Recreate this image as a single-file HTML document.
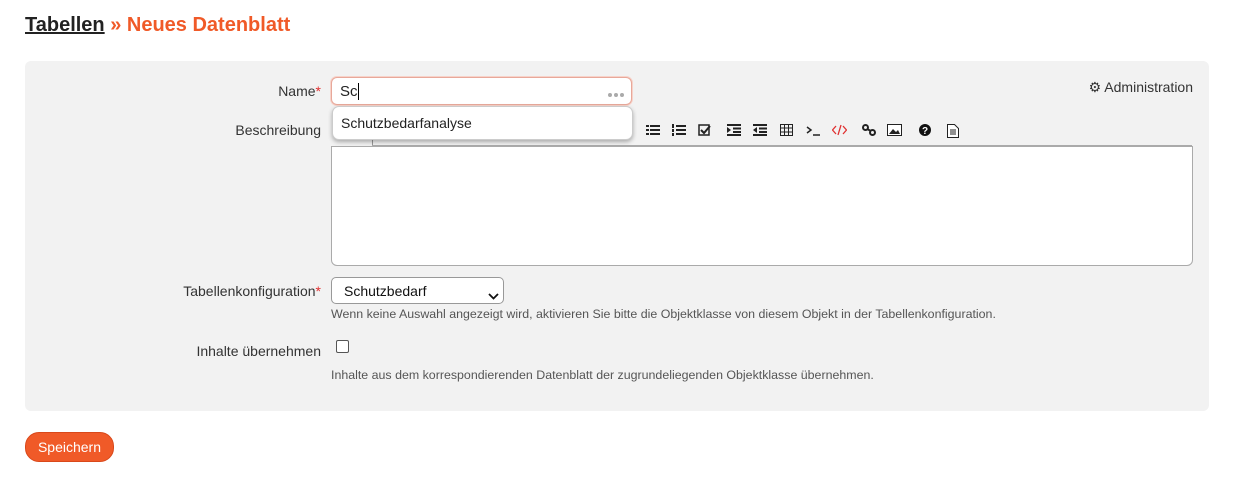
<!DOCTYPE html>
<html><head><meta charset="utf-8"><style>
body{margin:0;width:1236px;height:485px;background:#fff;font-family:"Liberation Sans",sans-serif;position:relative;color:#333;}
.abs{position:absolute}
h1{position:absolute;left:25px;top:14px;margin:0;font-size:20px;font-weight:bold;color:#f05a28;}
h1 u{color:#222;text-decoration-thickness:2px}
.panel{left:25px;top:61px;width:1184px;height:350px;background:#f2f2f2;border-radius:6px}
.lbl{font-size:14px;color:#333;text-align:right;width:300px;left:21px}
.star{color:#e03030}
.tb svg{position:absolute;top:0}
.hint{font-size:12.4px;color:#555;left:331px}
</style></head><body>
<h1><u>Tabellen</u> » Neues Datenblatt</h1>
<div class="abs panel"></div>
<div class="abs lbl" style="top:83px">Name<span class="star">*</span></div>
<div class="abs lbl" style="top:122px">Beschreibung</div>
<div class="abs lbl" style="top:283px">Tabellenkonfiguration<span class="star">*</span></div>
<div class="abs lbl" style="top:343px">Inhalte übernehmen</div>
<div class="abs" style="right:43px;top:79px;font-size:14px;color:#333">⚙ Administration</div>
<div class="abs" style="left:372px;top:130px;width:0;height:15px;border-left:1px solid #999"></div>
<div class="abs" style="left:372px;top:145px;width:820px;border-top:1px solid #aaa"></div>
<div class="abs" style="left:331px;top:146px;width:860px;height:118px;background:#fff;border:1px solid #aaa;border-radius:0 0 6px 6px"></div>
<div class="abs tb" style="left:0;top:124px">
<svg style="left:646px" width="14" height="12"><g fill="#222"><rect x="0" y="1" width="3" height="2"/><rect x="4" y="1" width="10" height="2"/><rect x="0" y="5" width="3" height="2"/><rect x="4" y="5" width="10" height="2"/><rect x="0" y="9" width="3" height="2"/><rect x="4" y="9" width="10" height="2"/></g></svg>
<svg style="left:672px" width="14" height="13"><g fill="#222"><rect x="4" y="1" width="10" height="2"/><rect x="4" y="5" width="10" height="2"/><rect x="4" y="9" width="10" height="2"/><rect x="0" y="0" width="2" height="4"/><rect x="0" y="5" width="2" height="3"/><rect x="0" y="9" width="2" height="3"/></g></svg>
<svg style="left:698px" width="13" height="12"><rect x="1" y="1" width="10" height="10" fill="none" stroke="#222" stroke-width="1.5"/><path d="M3 6l3 3 6-7" fill="none" stroke="#222" stroke-width="2"/></svg>
<svg style="left:727px" width="14" height="12"><g fill="#222"><rect x="0" y="0" width="14" height="2"/><rect x="6" y="3.5" width="8" height="2"/><rect x="6" y="7" width="8" height="2"/><rect x="0" y="10" width="14" height="2"/><path d="M0 3l4 3-4 3z"/></g></svg>
<svg style="left:753px" width="14" height="12"><g fill="#222"><rect x="0" y="0" width="14" height="2"/><rect x="6" y="3.5" width="8" height="2"/><rect x="6" y="7" width="8" height="2"/><rect x="0" y="10" width="14" height="2"/><path d="M4 3l-4 3 4 3z"/></g></svg>
<svg style="left:780px" width="13" height="12"><rect x="0.5" y="0.5" width="12" height="11" fill="none" stroke="#222"/><path d="M0 4h13M0 8h13M4.5 0v12M8.5 0v12" stroke="#222"/></svg>
<svg style="left:806px" width="14" height="12"><path d="M1 3l4 3-4 3" fill="none" stroke="#222" stroke-width="1.5"/><path d="M7 11h7" stroke="#222" stroke-width="1.5"/></svg>
<svg style="left:832px" width="15" height="12"><path d="M4 2L0.5 6 4 10M11 2l3.5 4L11 10M9 1L6 11" fill="none" stroke="#e03030" stroke-width="1.3"/></svg>
<svg style="left:862px" width="14" height="12"><circle cx="3.5" cy="3.5" r="2.5" fill="none" stroke="#222" stroke-width="2"/><circle cx="10.5" cy="8.5" r="2.5" fill="none" stroke="#222" stroke-width="2"/><path d="M5 5l4 2" stroke="#222" stroke-width="2"/></svg>
<svg style="left:887px" width="15" height="12"><rect x="0.5" y="0.5" width="14" height="11" fill="#fff" stroke="#222"/><path d="M2 10l4-5 3 3 2-2 2 4z" fill="#222"/></svg>
<svg style="left:919px" width="12" height="12"><circle cx="6" cy="6" r="6" fill="#111"/><text x="6" y="10" font-size="10" font-weight="bold" text-anchor="middle" fill="#fff" font-family="Liberation Sans">?</text></svg>
<svg style="left:947px" width="12" height="14"><path d="M0.5 0.5h7l4 4v9h-11z" fill="#fff" stroke="#222"/><path d="M3 6h6M3 8h6M3 10h6" stroke="#222"/></svg>
</div>
<div class="abs" style="left:331px;top:77px;width:299px;height:26px;background:#fff;border:1px solid #e8a89a;border-radius:6px;box-shadow:0 0 0 1px #f7d3ca"></div>
<div class="abs" style="left:340px;top:83px;font-size:15px;color:#222">Sc<span style="border-left:1px solid #000;margin-left:0px"></span></div>
<div class="abs" style="left:607px;top:85px;"><svg width="18" height="6"><g fill="#aaa"><circle cx="3" cy="3" r="2"/><circle cx="9" cy="3" r="2"/><circle cx="15" cy="3" r="2"/></g></svg></div>
<div class="abs" style="left:332px;top:106px;width:299px;height:32px;background:#fff;border:1px solid #ccc;border-radius:7px;box-shadow:0 2px 4px rgba(0,0,0,.3)"></div>
<div class="abs" style="left:341px;top:115px;font-size:14px;color:#222">Schutzbedarfanalyse</div>
<div class="abs" style="left:331px;top:277px;width:171px;height:25px;background:#fff;border:1px solid #999;border-radius:5px"></div>
<div class="abs" style="left:344px;top:283px;font-size:14px;color:#111">Schutzbedarf</div>
<div class="abs" style="left:488px;top:287px"><svg width="11" height="7"><path d="M1 1l4.5 4.5L10 1" fill="none" stroke="#111" stroke-width="1.8"/></svg></div>
<div class="abs hint" style="top:307px">Wenn keine Auswahl angezeigt wird, aktivieren Sie bitte die Objektklasse von diesem Objekt in der Tabellenkonfiguration.</div>
<div class="abs" style="left:336px;top:340px;width:11px;height:11px;border:1px solid #555;border-radius:2px;background:#fff"></div>
<div class="abs hint" style="top:368px">Inhalte aus dem korrespondierenden Datenblatt der zugrundeliegenden Objektklasse übernehmen.</div>
<div class="abs" style="left:25px;top:432px;width:87px;height:28px;background:#f05a28;border:1px solid #d9481a;border-radius:14px;color:#fff;font-size:14px;text-align:center;line-height:28px">Speichern</div>
</body></html>
